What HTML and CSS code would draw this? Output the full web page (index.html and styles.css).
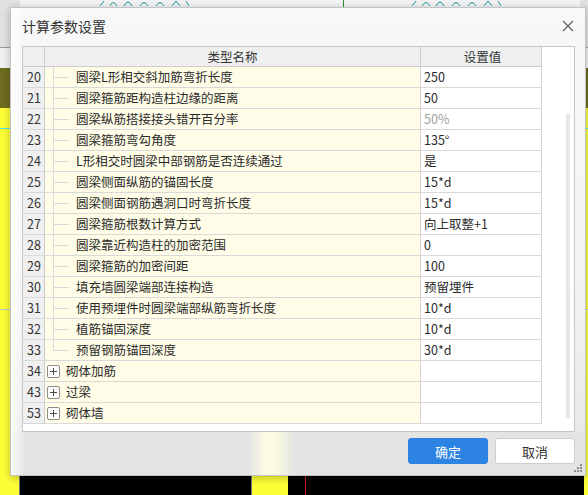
FILE: index.html
```html
<!DOCTYPE html>
<html lang="zh-CN">
<head>
<meta charset="utf-8">
<title>计算参数设置</title>
<link rel="stylesheet" href="styles.css">
</head>
<body>
<div class="desktop">
  <div class="bg-left"></div>
  <div class="bg-right"></div>
  <div class="bg-bottom"></div>
  <svg class="bg-marks" width="588" height="8" viewBox="0 0 588 8">
    <g fill="none" stroke="#1f9c9c" stroke-width="1">
      <path d="M100 6 L104 1"/><path d="M110 6 Q113 -1 117 6"/><path d="M124 6 Q128 -2 132 6"/>
      <path d="M140 6 Q144 -1 148 6"/><path d="M156 6 Q160 -1 164 6"/><path d="M172 6 L176 1 L180 6"/><path d="M186 1 L189 6"/>
      <path d="M412 6 L416 1"/><path d="M422 6 Q426 -1 430 6"/><path d="M436 6 Q440 -2 444 6"/>
      <path d="M452 6 Q456 -1 460 6"/><path d="M468 6 Q472 -1 476 6"/><path d="M484 6 L488 1 L492 6"/><path d="M498 1 L501 6"/>
    </g>
    <path d="M343.5 0 V7" stroke="#2e8b2e" stroke-width="1"/>
  </svg>

  <div class="dialog">
    <div class="titlebar">
      <span class="title">计算参数设置</span>
      <svg class="close" width="12" height="12" viewBox="0 0 12 12">
        <path d="M1 1 L11 11 M11 1 L1 11" stroke="#5a5a5a" stroke-width="1.1" fill="none"/>
      </svg>
    </div>

    <div class="table">
      <div class="cols">
        <div class="row head">
          <div class="cell num"></div>
          <div class="cell name">类型名称</div>
          <div class="cell val">设置值</div>
        </div>

        <div class="row"><div class="cell num">20</div><div class="cell name"><span class="guide"></span>圆梁L形相交斜加筋弯折长度</div><div class="cell val">250</div></div>
        <div class="row"><div class="cell num">21</div><div class="cell name"><span class="guide"></span>圆梁箍筋距构造柱边缘的距离</div><div class="cell val">50</div></div>
        <div class="row"><div class="cell num">22</div><div class="cell name"><span class="guide"></span>圆梁纵筋搭接接头错开百分率</div><div class="cell val muted">50%</div></div>
        <div class="row"><div class="cell num">23</div><div class="cell name"><span class="guide"></span>圆梁箍筋弯勾角度</div><div class="cell val">135°</div></div>
        <div class="row"><div class="cell num">24</div><div class="cell name"><span class="guide"></span>L形相交时圆梁中部钢筋是否连续通过</div><div class="cell val">是</div></div>
        <div class="row"><div class="cell num">25</div><div class="cell name"><span class="guide"></span>圆梁侧面纵筋的锚固长度</div><div class="cell val">15*d</div></div>
        <div class="row"><div class="cell num">26</div><div class="cell name"><span class="guide"></span>圆梁侧面钢筋遇洞口时弯折长度</div><div class="cell val">15*d</div></div>
        <div class="row"><div class="cell num">27</div><div class="cell name"><span class="guide"></span>圆梁箍筋根数计算方式</div><div class="cell val">向上取整+1</div></div>
        <div class="row"><div class="cell num">28</div><div class="cell name"><span class="guide"></span>圆梁靠近构造柱的加密范围</div><div class="cell val">0</div></div>
        <div class="row"><div class="cell num">29</div><div class="cell name"><span class="guide"></span>圆梁箍筋的加密间距</div><div class="cell val">100</div></div>
        <div class="row"><div class="cell num">30</div><div class="cell name"><span class="guide"></span>填充墙圆梁端部连接构造</div><div class="cell val">预留埋件</div></div>
        <div class="row"><div class="cell num">31</div><div class="cell name"><span class="guide"></span>使用预埋件时圆梁端部纵筋弯折长度</div><div class="cell val">10*d</div></div>
        <div class="row"><div class="cell num">32</div><div class="cell name"><span class="guide"></span>植筋锚固深度</div><div class="cell val">10*d</div></div>
        <div class="row"><div class="cell num">33</div><div class="cell name"><span class="guide last"></span>预留钢筋锚固深度</div><div class="cell val">30*d</div></div>
        <div class="row"><div class="cell num">34</div><div class="cell name"><span class="expander"></span>砌体加筋</div><div class="cell val"></div></div>
        <div class="row"><div class="cell num">43</div><div class="cell name"><span class="expander"></span>过梁</div><div class="cell val"></div></div>
        <div class="row"><div class="cell num">53</div><div class="cell name"><span class="expander"></span>砌体墙</div><div class="cell val"></div></div>
      </div>
      <div class="scrollarea"><div class="thumb"></div></div>
    </div>

    <div class="footer">
      <button class="btn primary">确定</button>
      <button class="btn">取消</button>
    </div>
    <svg class="grip" width="9" height="9" viewBox="0 0 9 9">
      <g fill="#8a8a8a">
        <rect x="6" y="0" width="2" height="2"/>
        <rect x="3" y="3" width="2" height="2"/><rect x="6" y="3" width="2" height="2"/>
        <rect x="0" y="6" width="2" height="2"/><rect x="3" y="6" width="2" height="2"/><rect x="6" y="6" width="2" height="2"/>
      </g>
    </svg>
  </div>
</div>
</body>
</html>
```

FILE: styles.css
```css
* { box-sizing: border-box; }
html, body { margin: 0; padding: 0; }
body {
  font-family: "Noto Sans CJK SC", "Noto Sans", "Liberation Sans", sans-serif;
  color: #2b2b2b;
}
.desktop {
  position: relative;
  width: 588px;
  height: 495px;
  overflow: hidden;
  background: #f3f3f3;
}
.bg-left, .bg-right {
  position: absolute;
  top: 0;
  height: 495px;
  background: linear-gradient(to bottom,
    #e2e2e2 0, #e2e2e2 47px, #9c9c9c 47px, #9c9c9c 48px,
    #f1f1f1 48px, #f1f1f1 68px, #6e6c1f 68px, #6e6c1f 108px,
    #fdfd37 108px, #fdfd37 128px, #4fe3e3 128px, #4fe3e3 129px,
    #fdfd37 129px, #fdfd37 309px, #b9c6d0 309px, #b9c6d0 310px,
    #fdfd37 310px);
}
.bg-left { left: 0; width: 20px; }
.bg-right { left: 580px; width: 8px; }
.bg-bottom {
  position: absolute;
  left: 0;
  top: 474px;
  width: 588px;
  height: 21px;
  background: linear-gradient(to right,
    #fdfd37 0, #fdfd37 19px, #7a7a7a 19px, #7a7a7a 20px,
    #000 20px, #000 251px, #7a7a7a 251px, #7a7a7a 252px,
    #fdfd37 252px, #fdfd37 288px, #000 288px, #000 305px,
    #d01010 305px, #d01010 306px, #000 306px, #000 584px,
    #fdfd37 584px);
}
.bg-marks { position: absolute; left: 0; top: 0; }

.dialog {
  position: absolute;
  left: 10px;
  top: 7px;
  width: 576px;
  height: 469px;
  border: 1px solid #c4c4c4;
  box-shadow: 0 2px 8px rgba(0,0,0,0.25);
  background:
    linear-gradient(to right, rgba(255,255,255,0.9), rgba(255,255,255,0) 14px),
    linear-gradient(to bottom, #f8f8f8 0, #f4f4f4 55%, #ebebeb 85%, #e4e4e4 100%);
  display: flex;
  flex-direction: column;
}
.titlebar {
  height: 38px;
  display: flex;
  align-items: center;
  justify-content: space-between;
  padding: 0 11px 2px 11px;
}
.title {
  font-size: 14px;
  color: #333;
  letter-spacing: 0;
}
.close { margin-right: 0; margin-top: 0; }

.table {
  margin: 0 10px 0 11px;
  height: 386px;
  border: 1px solid #c6c6c6;
  background: #fff;
  display: flex;
}
.cols { width: 519px; }
.row {
  display: grid;
  grid-template-columns: 22px 376px 121px;
  height: 21px;
  font-size: 12.5px;
  line-height: 20px;
}
.row.head { height: 20px; line-height: 19px; }
.cell {
  border-right: 1px solid #d2d2d2;
  border-bottom: 1px solid #d9d9d9;
  white-space: nowrap;
  overflow: hidden;
}
.head .cell {
  background: #f0f0f0;
  border-bottom-color: #cccccc;
  border-right-color: #cccccc;
  text-align: center;
  color: #333;
}
.num {
  background: #f0f0f0;
  border-right-color: #cccccc;
  text-align: center;
  padding-left: 1px;
  color: #333;
}
.name {
  background: #fffde7;
  display: flex;
  align-items: center;
  color: #2b2b2b;
}
.head .name { display: block; }
.val {
  padding-left: 3px;
  color: #2b2b2b;
}
.val.muted { color: #a0a0a0; }

.guide {
  flex: none;
  width: 31px;
  align-self: stretch;
  margin-bottom: -1px;
  background:
    linear-gradient(#d9d9d9, #d9d9d9) no-repeat 8px 0 / 1px 100%,
    linear-gradient(#d9d9d9, #d9d9d9) no-repeat 8px 10px / 16px 1px;
}
.guide.last {
  background:
    linear-gradient(#d9d9d9, #d9d9d9) no-repeat 8px 0 / 1px 11px,
    linear-gradient(#d9d9d9, #d9d9d9) no-repeat 8px 10px / 16px 1px;
}
.expander {
  flex: none;
  width: 13px;
  height: 13px;
  margin: 0 6px 0 2px;
  border: 1px solid #8c8c8c;
  border-radius: 2px;
  background:
    linear-gradient(#4a4a4a, #4a4a4a) no-repeat center / 7px 1px,
    linear-gradient(#4a4a4a, #4a4a4a) no-repeat center / 1px 7px,
    #fff;
}

.scrollarea {
  flex: 1;
  background: #fff;
}
.thumb {
  margin: 66px 0 0 24px;
  width: 4px;
  height: 306px;
  border-radius: 2px;
  background: #e8e8e8;
}

.footer {
  flex: 1;
  display: flex;
  justify-content: flex-end;
  align-items: flex-start;
  gap: 7px;
  padding: 6px 10px 0 0;
  background:
    linear-gradient(to right, rgba(255,255,255,0.85), rgba(255,255,255,0) 14px),
    linear-gradient(to right, rgba(252,252,226,0) 236px, #fcfce2 256px, #fcfce2 262px, rgba(252,252,226,0) 284px),
    #e4e4e4;
}
.btn {
  width: 80px;
  height: 26px;
  border: 1px solid #cdcdcd;
  border-radius: 3px;
  background: #fff;
  font-family: "Noto Sans CJK SC", "Noto Sans", sans-serif;
  font-size: 13px;
  color: #333;
  padding: 0;
}
.btn.primary {
  background: #2d83e2;
  border-color: #2d83e2;
  color: #fff;
}
.grip {
  position: absolute;
  right: 2px;
  bottom: 2px;
}
```
